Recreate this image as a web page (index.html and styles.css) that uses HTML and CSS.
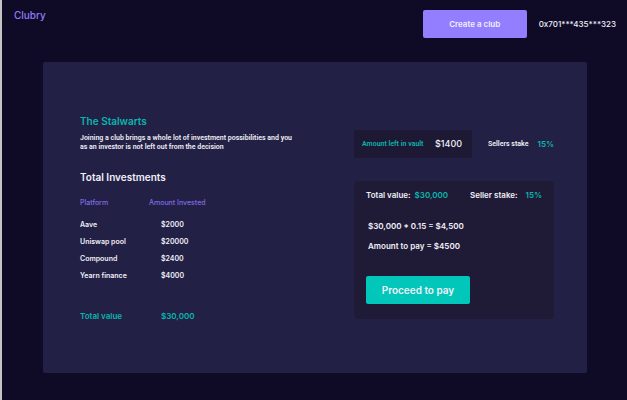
FILE: index.html
```html
<!DOCTYPE html>
<html lang="en">
<head>
<meta charset="utf-8">
<meta name="viewport" content="width=device-width, initial-scale=1">
<title>Clubry</title>
<link rel="stylesheet" href="styles.css">
</head>
<body>
<header class="topbar">
  <a class="brand" href="#">Clubry</a>
  <button class="btn btn-create" type="button">Create a club</button>
  <span class="wallet">0x701***435***323</span>
</header>
<main class="panel">
  <section class="club">
    <h1 class="club-name">The Stalwarts</h1>
    <p class="club-about">Joining a club brings a whole lot of investment possibilities and you as an investor is not left out from the decision</p>
    <h2 class="club-heading">Total Investments</h2>
    <table class="investments">
      <thead>
        <tr><th>Platform</th><th>Amount Invested</th></tr>
      </thead>
      <tbody>
        <tr><td>Aave</td><td>$2000</td></tr>
        <tr><td>Uniswap pool</td><td>$20000</td></tr>
        <tr><td>Compound</td><td>$2400</td></tr>
        <tr><td>Yearn finance</td><td>$4000</td></tr>
      </tbody>
      <tfoot>
        <tr><td>Total value</td><td>$30,000</td></tr>
      </tfoot>
    </table>
  </section>
  <section class="sale">
    <div class="summary">
      <div class="vault"><span class="vault-label">Amount left in vault</span><span class="vault-amount">$1400</span></div>
      <div class="stake"><span class="stake-label">Sellers stake</span><span class="accent">15%</span></div>
    </div>
    <div class="payment">
      <div class="payment-head">
        <div class="pair"><span>Total value:</span><span class="accent">$30,000</span></div>
        <div class="pair pair-wide"><span>Seller stake:</span><span class="accent">15%</span></div>
      </div>
      <p class="sum">$30,000 * 0.15 = $4,500</p>
      <p class="sum">Amount to pay = $4500</p>
      <button class="btn btn-pay" type="button">Proceed to pay</button>
    </div>
  </section>
</main>
</body>
</html>
```
FILE: styles.css
```css
* {
  box-sizing: border-box;
}

body {
  margin: 0;
  min-height: 100vh;
  border-left: 2px solid #c4c4c4;
  background: #0f0b27;
  color: #f1f0f7;
  font-family: Inter, "Open Sans", sans-serif;
  font-size: 8px;
  font-weight: 600;
  line-height: 12px;
}

h1, h2, p {
  margin: 0;
}

.topbar {
  display: flex;
  align-items: center;
  gap: 12px;
  padding: 10px 11px 0 12px;
}

.brand {
  align-self: flex-start;
  margin-right: auto;
  color: #8f7bfb;
  font-size: 10px;
  font-weight: 500;
  line-height: 10px;
  text-decoration: none;
}

.btn {
  width: 104px;
  height: 28px;
  padding: 0;
  border: 0;
  border-radius: 2px;
  color: #f1f0f7;
  font-family: inherit;
  font-weight: 600;
}

.btn-create {
  background: #937eff;
  font-size: 8px;
}

.wallet {
  font-size: 8px;
  font-weight: 500;
}

.panel {
  display: flex;
  justify-content: space-between;
  margin: 24px 40px 27px 41px;
  padding: 50px 33px 43px 37px;
  border-radius: 2px;
  background: #232045;
}

.club {
  width: 220px;
}

.club-name {
  padding-top: 2px;
  color: #0bb5ad;
  font-size: 10px;
  font-weight: 600;
  line-height: 14px;
}

.club-about {
  margin-top: 6px;
  font-family: Roboto, Inter, sans-serif;
  font-size: 7px;
  font-weight: 600;
  line-height: 9px;
}

.club-heading {
  margin-top: 18px;
  font-size: 10px;
  font-weight: 600;
  line-height: 14px;
}

.investments {
  margin-top: 10px;
  border-collapse: collapse;
  font-size: 7px;
}

.investments th,
.investments td {
  height: 17px;
  padding: 0;
  font-weight: 600;
  text-align: left;
}

.investments th {
  height: 22px;
  padding-bottom: 5px;
  font-weight: 500;
  color: #7f6ce4;
}

.investments th:first-child {
  width: 69px;
}

.investments td + td {
  padding-left: 12px;
}

.investments tfoot td {
  height: 46px;
  padding-top: 18px;
  color: #0bb5ad;
  font-size: 8px;
}

.sale {
  width: 200px;
  padding-top: 18px;
}

.summary,
.stake,
.vault {
  display: flex;
  align-items: center;
  justify-content: space-between;
}

.vault {
  width: 118px;
  height: 28px;
  padding: 0 10px 0 8px;
  border-radius: 2px;
  background: #1d1934;
}

.vault-label,
.stake-label {
  font-family: Roboto, Inter, sans-serif;
  font-size: 7px;
  font-weight: 600;
}

.vault-label {
  color: #0bb5ad;
}

.vault-amount {
  font-size: 9px;
  font-weight: 500;
}

.stake {
  width: 66px;
}

.accent {
  color: #0bb5ad;
}

.payment {
  margin-top: 23px;
  padding: 8px 12px 15px;
  border-radius: 4px;
  background: #1f1b36;
}

.payment-head {
  display: flex;
  justify-content: space-between;
  margin-bottom: 19px;
}

.pair {
  display: flex;
  gap: 4px;
}

.pair-wide {
  gap: 8px;
}

.sum {
  margin: 0 2px 8px;
}

.btn-pay {
  display: block;
  margin-top: 24px;
  background: #00c7b9;
  font-size: 10px;
}
```
